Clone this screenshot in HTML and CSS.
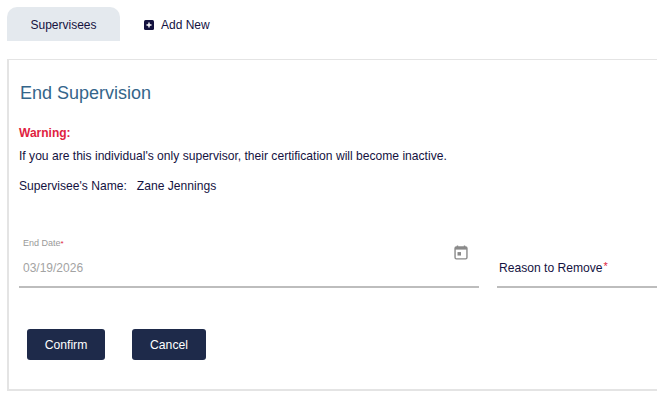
FILE: index.html
```html
<!DOCTYPE html>
<html lang="en">
<head>
  <meta charset="UTF-8">
  <title>Supervisees</title>
  <link rel="stylesheet" href="styles.css">
</head>
<body>
  <div class="tabs">
    <div class="tab active">Supervisees</div>
    <div class="tab add-tab">
      <svg class="plus-icon" viewBox="0 0 10 10" width="10" height="10" aria-hidden="true">
        <rect width="10" height="10" rx="1.5" fill="#14123f"/>
        <path d="M5 2.5v5M2.5 5h5" stroke="#fff" stroke-width="1.4"/>
      </svg>
      Add New
    </div>
  </div>

  <div class="card">
    <h2 class="card-title">End Supervision</h2>
    <div class="warning">Warning:</div>
    <p class="warning-text">If you are this individual's only supervisor, their certification will become inactive.</p>
    <p class="name-line"><span class="name-label">Supervisee's Name:</span>Zane Jennings</p>

    <div class="fields">
      <div class="field date-field">
        <label class="float-label">End Date<span class="req">*</span></label>
        <div class="date-value">03/19/2026</div>
        <svg class="cal-icon" viewBox="0 0 16 17" width="14" height="15" aria-hidden="true">
          <path d="M4 .5v3M12 .5v3" stroke="#8a8a8a" stroke-width="1.6"/>
          <rect x="1.2" y="2.2" width="13.6" height="13.6" rx="1.5" fill="none" stroke="#8a8a8a" stroke-width="1.6"/>
          <rect x="1.2" y="2.2" width="13.6" height="3" fill="#8a8a8a"/>
          <rect x="4" y="8" width="4" height="4" fill="#8a8a8a"/>
        </svg>
      </div>
      <div class="field reason-field">
        <span class="select-label">Reason to Remove<span class="req">*</span></span>
      </div>
    </div>

    <div class="actions">
      <button class="btn">Confirm</button>
      <button class="btn">Cancel</button>
    </div>
  </div>
</body>
</html>
```

FILE: styles.css
```css
html, body {
  overflow: hidden;
}

body {
  margin: 0;
  padding: 7px 0 0 7px;
  width: 657px;
  height: 404px;
  box-sizing: border-box;
  font-family: "Liberation Sans", Arial, sans-serif;
  font-size: 12px;
  color: #14123f;
  background-color: #fff;
}

.tabs {
  display: flex;
  height: 34px;
  margin-bottom: 18px;
}

.tab {
  display: flex;
  align-items: center;
  padding-top: 1px;
  font-size: 12px;
  box-sizing: border-box;
}

.tab.active {
  width: 113px;
  justify-content: center;
  background-color: #e4e9ee;
  border-radius: 10px 10px 0 0;
}

.add-tab {
  margin-left: 24px;
  gap: 7px;
}

.plus-icon {
  flex: none;
}

.card {
  width: 760px;
  height: 332px;
  box-sizing: border-box;
  padding: 0 10px;
  border: 1px solid #e4e4e4;
  border-width: 1px 1px 2px 2px;
}

.card-title {
  margin: 23px 0 0 1px;
  font-size: 18px;
  font-weight: normal;
  line-height: 21px;
  color: #34658a;
}

.warning {
  margin-top: 22px;
  font-weight: bold;
  line-height: 14px;
  color: #e0223f;
}

.warning-text {
  margin: 9px 0 0;
  font-size: 12.1px;
  line-height: 14px;
}

.name-line {
  margin: 16px 0 0;
  font-size: 12.1px;
  line-height: 14px;
}

.name-label {
  margin-right: 10px;
}

.fields {
  display: flex;
  gap: 18px;
  margin-top: 42px;
}

.field {
  position: relative;
  flex: none;
  height: 53px;
  box-sizing: border-box;
  border-bottom: 2px solid #bdbdbd;
}

.date-field {
  width: 460px;
  padding: 3px 0 0 4px;
}

.reason-field {
  width: 280px;
  padding: 26px 0 0 2px;
}

.float-label {
  display: block;
  font-size: 9px;
  line-height: 10px;
  color: #9a9a9a;
}

.date-value {
  margin-top: 13px;
  font-size: 12px;
  line-height: 14px;
  color: #a3a3a3;
}

.cal-icon {
  position: absolute;
  top: 10px;
  right: 11px;
}

.select-label {
  font-size: 12.1px;
  line-height: 14px;
}

.req {
  color: #e0223f;
  line-height: 0;
}

.float-label .req {
  font-size: 8px;
}

.select-label .req {
  margin-left: 1px;
  font-size: 11px;
  vertical-align: 2px;
}

.actions {
  display: flex;
  gap: 27px;
  margin-top: 41px;
  margin-left: 8px;
}

.btn {
  width: 78px;
  height: 31px;
  font-family: inherit;
  font-size: 12.2px;
  color: #fff;
  background-color: #1e2a4a;
  border: 0;
  border-radius: 3px;
}

.btn + .btn {
  width: 74px;
}
```
